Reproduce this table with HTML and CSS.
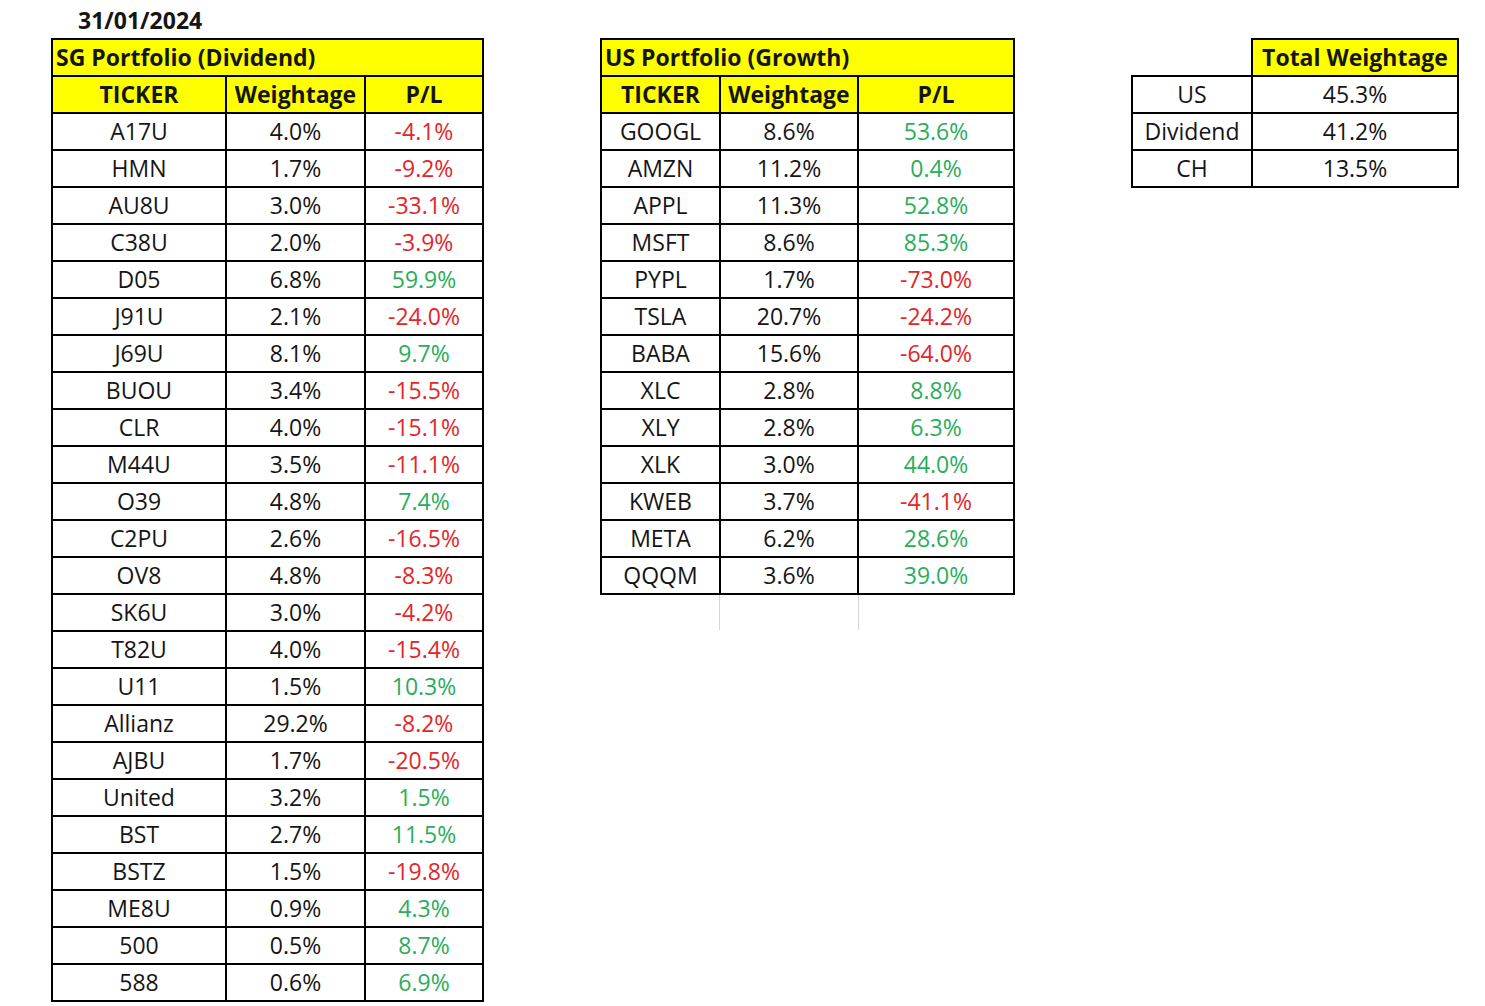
FILE: index.html
```html
<!DOCTYPE html>
<html lang="en">
<head>
<meta charset="utf-8">
<title>Portfolio 31/01/2024</title>
<link rel="stylesheet" href="styles.css">
</head>
<body>
<main class="page">
  <section class="block block-sg">
    <div class="date">31/01/2024</div>
    <div class="sheet sheet-sg">
      <div class="cell title">SG Portfolio (Dividend)</div>
      <div class="cell head">TICKER</div><div class="cell head">Weightage</div><div class="cell head">P/L</div>
      <div class="cell">A17U</div><div class="cell">4.0%</div><div class="cell neg">-4.1%</div>
      <div class="cell">HMN</div><div class="cell">1.7%</div><div class="cell neg">-9.2%</div>
      <div class="cell">AU8U</div><div class="cell">3.0%</div><div class="cell neg">-33.1%</div>
      <div class="cell">C38U</div><div class="cell">2.0%</div><div class="cell neg">-3.9%</div>
      <div class="cell">D05</div><div class="cell">6.8%</div><div class="cell pos">59.9%</div>
      <div class="cell">J91U</div><div class="cell">2.1%</div><div class="cell neg">-24.0%</div>
      <div class="cell">J69U</div><div class="cell">8.1%</div><div class="cell pos">9.7%</div>
      <div class="cell">BUOU</div><div class="cell">3.4%</div><div class="cell neg">-15.5%</div>
      <div class="cell">CLR</div><div class="cell">4.0%</div><div class="cell neg">-15.1%</div>
      <div class="cell">M44U</div><div class="cell">3.5%</div><div class="cell neg">-11.1%</div>
      <div class="cell">O39</div><div class="cell">4.8%</div><div class="cell pos">7.4%</div>
      <div class="cell">C2PU</div><div class="cell">2.6%</div><div class="cell neg">-16.5%</div>
      <div class="cell">OV8</div><div class="cell">4.8%</div><div class="cell neg">-8.3%</div>
      <div class="cell">SK6U</div><div class="cell">3.0%</div><div class="cell neg">-4.2%</div>
      <div class="cell">T82U</div><div class="cell">4.0%</div><div class="cell neg">-15.4%</div>
      <div class="cell">U11</div><div class="cell">1.5%</div><div class="cell pos">10.3%</div>
      <div class="cell">Allianz</div><div class="cell">29.2%</div><div class="cell neg">-8.2%</div>
      <div class="cell">AJBU</div><div class="cell">1.7%</div><div class="cell neg">-20.5%</div>
      <div class="cell">United</div><div class="cell">3.2%</div><div class="cell pos">1.5%</div>
      <div class="cell">BST</div><div class="cell">2.7%</div><div class="cell pos">11.5%</div>
      <div class="cell">BSTZ</div><div class="cell">1.5%</div><div class="cell neg">-19.8%</div>
      <div class="cell">ME8U</div><div class="cell">0.9%</div><div class="cell pos">4.3%</div>
      <div class="cell">500</div><div class="cell">0.5%</div><div class="cell pos">8.7%</div>
      <div class="cell">588</div><div class="cell">0.6%</div><div class="cell pos">6.9%</div>
    </div>
  </section>

  <section class="block block-us">
    <div class="sheet sheet-us">
      <div class="cell title">US Portfolio (Growth)</div>
      <div class="cell head">TICKER</div><div class="cell head">Weightage</div><div class="cell head">P/L</div>
      <div class="cell">GOOGL</div><div class="cell">8.6%</div><div class="cell pos">53.6%</div>
      <div class="cell">AMZN</div><div class="cell">11.2%</div><div class="cell pos">0.4%</div>
      <div class="cell">APPL</div><div class="cell">11.3%</div><div class="cell pos">52.8%</div>
      <div class="cell">MSFT</div><div class="cell">8.6%</div><div class="cell pos">85.3%</div>
      <div class="cell">PYPL</div><div class="cell">1.7%</div><div class="cell neg">-73.0%</div>
      <div class="cell">TSLA</div><div class="cell">20.7%</div><div class="cell neg">-24.2%</div>
      <div class="cell">BABA</div><div class="cell">15.6%</div><div class="cell neg">-64.0%</div>
      <div class="cell">XLC</div><div class="cell">2.8%</div><div class="cell pos">8.8%</div>
      <div class="cell">XLY</div><div class="cell">2.8%</div><div class="cell pos">6.3%</div>
      <div class="cell">XLK</div><div class="cell">3.0%</div><div class="cell pos">44.0%</div>
      <div class="cell">KWEB</div><div class="cell">3.7%</div><div class="cell neg">-41.1%</div>
      <div class="cell">META</div><div class="cell">6.2%</div><div class="cell pos">28.6%</div>
      <div class="cell">QQQM</div><div class="cell">3.6%</div><div class="cell pos">39.0%</div>
    </div>
    <div class="ghost">
      <div class="ghost-cell g1"></div><div class="ghost-cell g2"></div>
    </div>
  </section>

  <section class="block block-total">
    <div class="total">
      <div class="t-blank"></div><div class="t-head">Total Weightage</div>
      <div class="t-label">US</div><div class="t-val">45.3%</div>
      <div class="t-label">Dividend</div><div class="t-val">41.2%</div>
      <div class="t-label">CH</div><div class="t-val">13.5%</div>
    </div>
  </section>
</main>
</body>
</html>
```

FILE: styles.css
```css
* { box-sizing: border-box; }

html, body {
  margin: 0;
  padding: 0;
  background: #ffffff;
}

body {
  font-family: "Open Sans", Lato, "Liberation Sans", sans-serif;
  font-size: 23px;
  color: #151515;
}

.page {
  display: flex;
  align-items: flex-start;
  gap: 116px;
  padding-left: 51px;
}

.block-us,
.block-total {
  padding-top: 38px;
}

.date {
  height: 38px;
  padding-top: 2px;
  padding-left: 27px;
  line-height: 36px;
  font-weight: 700;
}

.sheet {
  display: grid;
  border-left: 2px solid #000;
  border-top: 2px solid #000;
}

.sheet-sg { grid-template-columns: 174px 139px 118px; }
.sheet-us { grid-template-columns: 119px 138px 156px; }

.cell {
  height: 37px;
  line-height: 34px;
  border-right: 2px solid #000;
  border-bottom: 2px solid #000;
  text-align: center;
  white-space: nowrap;
}

.cell.title {
  grid-column: 1 / -1;
  text-align: left;
  padding-left: 3px;
  font-weight: 700;
  background: #ffff00;
}

.cell.head {
  font-weight: 700;
  background: #ffff00;
}

.neg { color: #e42529; }
.pos { color: #2aad5b; }

.ghost {
  display: flex;
  padding-left: 2px;
  height: 35px;
}

.ghost-cell {
  border-right: 1px solid #d6d6d6;
}
.g1 { width: 118px; }
.g2 { width: 139px; }

.total {
  display: grid;
  grid-template-columns: 122px 206px;
}

.t-blank {
  height: 39px;
  border-right: 2px solid #000;
  border-bottom: 2px solid #000;
}

.t-head {
  height: 39px;
  line-height: 34px;
  border-top: 2px solid #000;
  border-right: 2px solid #000;
  border-bottom: 2px solid #000;
  background: #ffff00;
  font-weight: 700;
  text-align: center;
}

.t-label,
.t-val {
  height: 37px;
  line-height: 34px;
  border-right: 2px solid #000;
  border-bottom: 2px solid #000;
  text-align: center;
}

.t-label { border-left: 2px solid #000; }
```
